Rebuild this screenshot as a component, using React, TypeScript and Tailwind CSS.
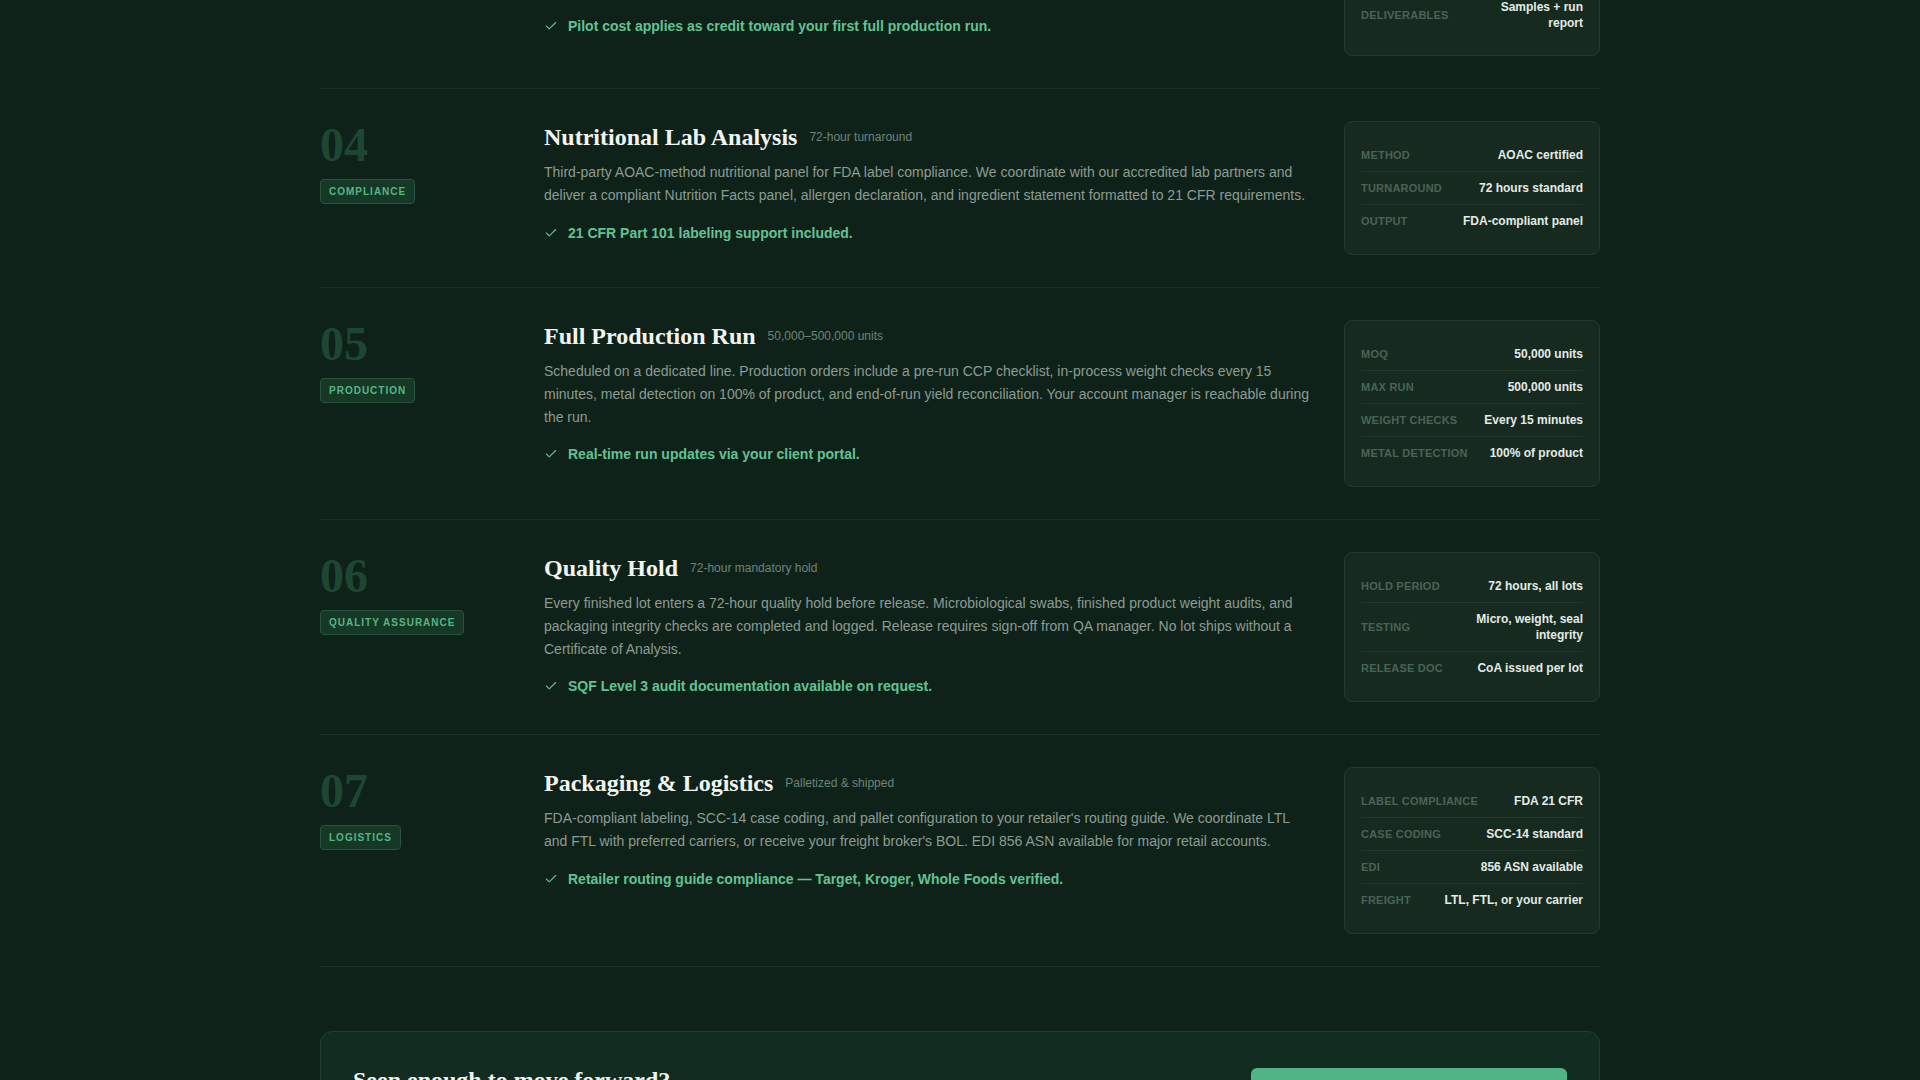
import React from 'react';

interface Spec {
  label: string;
  value: string;
}

interface Step {
  num: string;
  tag: string;
  title: string;
  meta: string;
  body: string;
  note: string;
  specs: Spec[];
}

const steps: Step[] = [
  {
    num: '04',
    tag: 'Compliance',
    title: 'Nutritional Lab Analysis',
    meta: '72-hour turnaround',
    body: 'Third-party AOAC-method nutritional panel for FDA label compliance. We coordinate with our accredited lab partners and deliver a compliant Nutrition Facts panel, allergen declaration, and ingredient statement formatted to 21 CFR requirements.',
    note: '21 CFR Part 101 labeling support included.',
    specs: [
      { label: 'Method', value: 'AOAC certified' },
      { label: 'Turnaround', value: '72 hours standard' },
      { label: 'Output', value: 'FDA-compliant panel' },
    ],
  },
  {
    num: '05',
    tag: 'Production',
    title: 'Full Production Run',
    meta: '50,000–500,000 units',
    body: 'Scheduled on a dedicated line. Production orders include a pre-run CCP checklist, in-process weight checks every 15 minutes, metal detection on 100% of product, and end-of-run yield reconciliation. Your account manager is reachable during the run.',
    note: 'Real-time run updates via your client portal.',
    specs: [
      { label: 'MOQ', value: '50,000 units' },
      { label: 'Max run', value: '500,000 units' },
      { label: 'Weight checks', value: 'Every 15 minutes' },
      { label: 'Metal detection', value: '100% of product' },
    ],
  },
  {
    num: '06',
    tag: 'Quality Assurance',
    title: 'Quality Hold',
    meta: '72-hour mandatory hold',
    body: 'Every finished lot enters a 72-hour quality hold before release. Microbiological swabs, finished product weight audits, and packaging integrity checks are completed and logged. Release requires sign-off from QA manager. No lot ships without a Certificate of Analysis.',
    note: 'SQF Level 3 audit documentation available on request.',
    specs: [
      { label: 'Hold period', value: '72 hours, all lots' },
      { label: 'Testing', value: 'Micro, weight, seal integrity' },
      { label: 'Release doc', value: 'CoA issued per lot' },
    ],
  },
  {
    num: '07',
    tag: 'Logistics',
    title: 'Packaging & Logistics',
    meta: 'Palletized & shipped',
    body: "FDA-compliant labeling, SCC-14 case coding, and pallet configuration to your retailer's routing guide. We coordinate LTL and FTL with preferred carriers, or receive your freight broker's BOL. EDI 856 ASN available for major retail accounts.",
    note: 'Retailer routing guide compliance — Target, Kroger, Whole Foods verified.',
    specs: [
      { label: 'Label compliance', value: 'FDA 21 CFR' },
      { label: 'Case coding', value: 'SCC-14 standard' },
      { label: 'EDI', value: '856 ASN available' },
      { label: 'Freight', value: 'LTL, FTL, or your carrier' },
    ],
  },
];

const CheckIcon = () => (
  <svg className="w-3.5 h-3.5 shrink-0 text-[#5cbf8d]" fill="none" stroke="currentColor" viewBox="0 0 24 24">
    <path strokeLinecap="round" strokeLinejoin="round" strokeWidth="2" d="M20 6 9 17l-5-5" />
  </svg>
);

const Note = ({ text }: { text: string }) => (
  <div className="flex items-center gap-2.5">
    <CheckIcon />
    <span className="text-[14px] leading-5 font-bold text-[#62c294]">{text}</span>
  </div>
);

const SpecRow = ({ spec, first }: { spec: Spec; first?: boolean }) => (
  <div className={`flex items-center justify-between gap-4 py-2 ${first ? '' : 'border-t border-[#22382c]'}`}>
    <span className="shrink-0 whitespace-nowrap text-[11px] leading-4 font-bold uppercase tracking-[0.02em] text-[#4b6355]">
      {spec.label}
    </span>
    <span className="text-right text-[12px] leading-4 font-bold text-[#e4ebe6]">{spec.value}</span>
  </div>
);

const StepRow = ({ step }: { step: Step }) => (
  <div className="grid grid-cols-[192px_1fr_256px] gap-8 py-8 border-b border-[#1b3026]">
    <div className="flex flex-col items-start">
      <div className="font-['Liberation_Serif',serif] text-[48px] leading-none font-bold text-[#1e4733]">{step.num}</div>
      <span className="mt-2.5 rounded border border-[#28543d] bg-[#163827] px-2 py-1 text-[10px] leading-[15px] font-bold uppercase tracking-[0.1em] text-[#55b585]">
        {step.tag}
      </span>
    </div>
    <div>
      <div className="flex items-center gap-3">
        <h3 className="font-['Liberation_Serif',serif] text-[24px] leading-8 font-bold text-[#f2f4f1]">{step.title}</h3>
        <span className="text-[12px] text-[#6e8479]">{step.meta}</span>
      </div>
      <p className="mt-2 text-[14px] leading-[22.75px] text-[#8c9c93]">{step.body}</p>
      <div className="mt-4">
        <Note text={step.note} />
      </div>
    </div>
    <div>
      <div className="rounded-lg border border-[#213a2d] bg-[#172a20] px-4 py-[17px]">
        {step.specs.map((s, i) => (
          <SpecRow key={s.label} spec={s} first={i === 0} />
        ))}
      </div>
    </div>
  </div>
);

export default function App() {
  return (
    <div className="min-h-screen bg-[#0f2219] font-['Liberation_Sans',Arial,sans-serif] overflow-hidden">
      <div className="mx-auto w-[1280px]">
        {/* tail of step 03, scrolled past */}
        <div className="grid grid-cols-[192px_1fr_256px] gap-8 pb-8 border-b border-[#1b3026]">
          <div />
          <div className="pt-4">
            <Note text="Pilot cost applies as credit toward your first full production run." />
          </div>
          <div>
            <div className="rounded-b-lg border border-t-0 border-[#213a2d] bg-[#172a20] px-4 pb-4">
              <div className="-mt-[9px]">
                <SpecRow spec={{ label: 'Deliverables', value: 'Samples + run report' }} first />
              </div>
            </div>
          </div>
        </div>

        {steps.map(s => (
          <StepRow key={s.num} step={s} />
        ))}

        <div className="mt-16 rounded-xl border border-[#1f4030] bg-[#132c21] px-8 py-8 flex items-start justify-between">
          <div>
            <h3 className="font-['Liberation_Serif',serif] text-[24px] leading-8 font-bold text-[#f2f4f1]">Seen enough to move forward?</h3>
            <p className="mt-2 text-[14px] leading-[22.75px] text-[#8c9c93]">Start with a pilot run and scale into full production when you're ready.</p>
          </div>
          <button className="mt-1 w-[316px] h-12 rounded-md bg-[#4fb586] text-[15px] font-bold text-[#0f2219]">
            Request a Pilot Run
          </button>
        </div>
      </div>
    </div>
  );
}
